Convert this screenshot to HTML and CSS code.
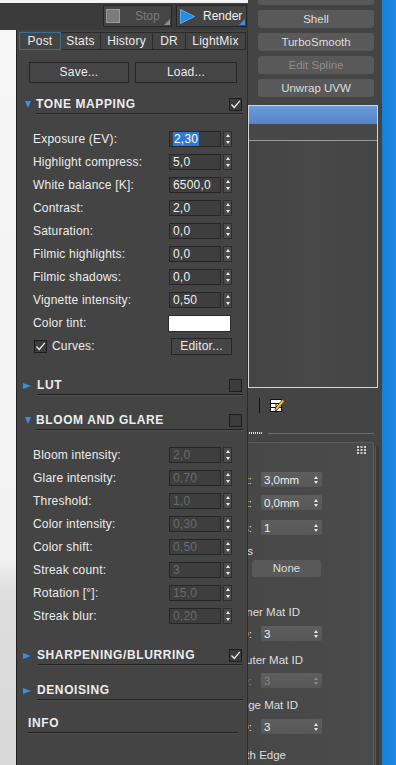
FILE: index.html
```html
<!DOCTYPE html>
<html lang="en">
<head>
    <meta charset="UTF-8">
    <meta name="viewport" content="width=device-width, initial-scale=1.0">
    <title>Corona VFB - Post</title>
    <link rel="stylesheet" href="styles.css">
</head>
<body>
<div class="screen">
    <!-- frame buffer window -->
    <div class="vfb">
        <div class="vfb-bar">
            <div class="rbtn rbtn-stop"><span class="stop-ico"></span><span>Stop</span></div>
            <div class="rbtn rbtn-render">
                <svg width="15" height="15" viewBox="0 0 15 15"><polygon points="0.5,0.5 14.5,7.5 0.5,14.5" fill="#2c8ae4" stroke="#5aa8f0" stroke-width="1"/></svg>
                <span>Render</span>
            </div>
        </div>
        <div class="vfb-main">
            <div class="image-area"></div>
            <div class="post">
                <div class="tabs">
                    <div class="tab tab-on tab-post">Post</div>
                    <div class="tab tab-stats">Stats</div>
                    <div class="tab tab-history">History</div>
                    <div class="tab tab-dr">DR</div>
                    <div class="tab tab-lightmix">LightMix</div>
                </div>

                <div class="file-row">
                    <div class="btn btn-save">Save...</div>
                    <div class="btn btn-load">Load...</div>
                </div>

                <!-- tone mapping -->
                <div class="roll-head">
                    <span class="arrow-down"></span>
                    <div class="roll-title"><span>TONE MAPPING</span><span class="chk"><svg width="11" height="11" viewBox="0 0 11 11"><path d="M1.5 5.5 L4.3 8.5 L9.8 1.8" fill="none" stroke="#f2f2f2" stroke-width="1.2"/></svg></span></div>
                </div>
                <div class="roll-body">
                    <div class="row"><span class="lbl">Exposure (EV):</span><span class="field"><span class="sel">2,30</span></span><span class="spin"></span></div>
                    <div class="row"><span class="lbl">Highlight compress:</span><span class="field">5,0</span><span class="spin"></span></div>
                    <div class="row"><span class="lbl">White balance [K]:</span><span class="field">6500,0</span><span class="spin"></span></div>
                    <div class="row"><span class="lbl">Contrast:</span><span class="field">2,0</span><span class="spin"></span></div>
                    <div class="row"><span class="lbl">Saturation:</span><span class="field">0,0</span><span class="spin"></span></div>
                    <div class="row"><span class="lbl">Filmic highlights:</span><span class="field">0,0</span><span class="spin"></span></div>
                    <div class="row"><span class="lbl">Filmic shadows:</span><span class="field">0,0</span><span class="spin"></span></div>
                    <div class="row"><span class="lbl">Vignette intensity:</span><span class="field">0,50</span><span class="spin"></span></div>
                    <div class="row"><span class="lbl">Color tint:</span><span class="tint"></span></div>
                    <div class="row">
                        <span class="chk chk-row"><svg width="11" height="11" viewBox="0 0 11 11"><path d="M1.5 5.5 L4.3 8.5 L9.8 1.8" fill="none" stroke="#f2f2f2" stroke-width="1.2"/></svg></span>
                        <span class="lbl">Curves:</span>
                        <span class="btn btn-editor">Editor...</span>
                    </div>
                </div>

                <!-- lut -->
                <div class="roll-head roll-closed">
                    <span class="arrow-right"></span>
                    <div class="roll-title"><span>LUT</span><span class="chk"></span></div>
                </div>

                <!-- bloom and glare -->
                <div class="roll-head">
                    <span class="arrow-down"></span>
                    <div class="roll-title"><span>BLOOM AND GLARE</span><span class="chk"></span></div>
                </div>
                <div class="roll-body roll-off">
                    <div class="row"><span class="lbl">Bloom intensity:</span><span class="field">2,0</span><span class="spin"></span></div>
                    <div class="row"><span class="lbl">Glare intensity:</span><span class="field">0,70</span><span class="spin"></span></div>
                    <div class="row"><span class="lbl">Threshold:</span><span class="field">1,0</span><span class="spin"></span></div>
                    <div class="row"><span class="lbl">Color intensity:</span><span class="field">0,30</span><span class="spin"></span></div>
                    <div class="row"><span class="lbl">Color shift:</span><span class="field">0,50</span><span class="spin"></span></div>
                    <div class="row"><span class="lbl">Streak count:</span><span class="field">3</span><span class="spin"></span></div>
                    <div class="row"><span class="lbl">Rotation [°]:</span><span class="field">15,0</span><span class="spin"></span></div>
                    <div class="row"><span class="lbl">Streak blur:</span><span class="field">0,20</span><span class="spin"></span></div>
                </div>

                <div class="roll-head roll-closed">
                    <span class="arrow-right"></span>
                    <div class="roll-title"><span>SHARPENING/BLURRING</span><span class="chk"><svg width="11" height="11" viewBox="0 0 11 11"><path d="M1.5 5.5 L4.3 8.5 L9.8 1.8" fill="none" stroke="#f2f2f2" stroke-width="1.2"/></svg></span></div>
                </div>
                <div class="roll-head roll-closed roll-last">
                    <span class="arrow-right"></span>
                    <div class="roll-title"><span>DENOISING</span></div>
                </div>
                <div class="roll-info"><span>INFO</span></div>
            </div>
        </div>
    </div>

    <!-- 3ds max command panel, partly under the frame buffer -->
    <div class="cmd">
        <div class="mods">
            <div class="mbtn">FFD 3x3x3</div>
            <div class="mbtn">Shell</div>
            <div class="mbtn">TurboSmooth</div>
            <div class="mbtn mbtn-off">Edit Spline</div>
            <div class="mbtn">Unwrap UVW</div>
        </div>
        <div class="stack">
            <div class="stack-sel"></div>
            <div class="stack-row"></div>
        </div>
        <div class="stack-tools">
            <span class="tool-sep"></span>
            <svg width="15" height="16" viewBox="0 0 15 16">
                <rect x="0.5" y="2.5" width="11" height="12" fill="#fff" stroke="#111"/>
                <path d="M0.5 6.5H11.5M0.5 10.5H11.5M6 6.5V14.5" stroke="#111" fill="none"/>
                <path d="M5.5 11 L12.5 2.5 L14.5 4.2 L7.5 12.5 L5 13.5 Z" fill="#f2c230" stroke="#5b3f08" stroke-width="0.8"/>
            </svg>
        </div>
        <div class="roll-sep"><span class="dots"></span><span class="sep-line"></span></div>
        <div class="params-wrap">
            <div class="params">
                <div class="grip-row">
                    <svg width="9" height="8" viewBox="0 0 9 8" fill="#cfcfcf">
                        <rect x="0" y="0" width="2" height="2"/><rect x="3.5" y="0" width="2" height="2"/><rect x="7" y="0" width="2" height="2"/>
                        <rect x="0" y="3" width="2" height="2"/><rect x="3.5" y="3" width="2" height="2"/><rect x="7" y="3" width="2" height="2"/>
                        <rect x="0" y="6" width="2" height="2"/><rect x="3.5" y="6" width="2" height="2"/><rect x="7" y="6" width="2" height="2"/>
                    </svg>
                </div>
                <div class="prow mt15"><span class="pclip pclip-colon"><span>Inner Amount:</span></span><span class="pfield">3,0mm<span class="parr"></span></span></div>
                <div class="prow mt8"><span class="pclip pclip-colon"><span>Outer Amount:</span></span><span class="pfield">0,0mm<span class="parr"></span></span></div>
                <div class="prow mt10"><span class="pclip pclip-colon"><span>Segments:</span></span><span class="pfield">1<span class="parr"></span></span></div>
                <div class="ptext mt8"><span class="pclip pclip-bevel"><span>Bevel Edges</span></span></div>
                <div class="pbtn">None</div>
                <div class="ptext mt27"><span class="pclip pclip-inner"><span>Override Inner Mat ID</span></span></div>
                <div class="prow mt6"><span class="pclip pclip-colon"><span>Mat ID:</span></span><span class="pfield">3<span class="parr"></span></span></div>
                <div class="ptext mt11"><span class="pclip pclip-outer"><span>Override Outer Mat ID</span></span></div>
                <div class="prow prow-off mt5"><span class="pclip pclip-colon"><span>Mat ID:</span></span><span class="pfield">3<span class="parr"></span></span></div>
                <div class="ptext mt9"><span class="pclip pclip-edge"><span>Override Edge Mat ID</span></span></div>
                <div class="prow mt6"><span class="pclip pclip-colon"><span>Mat ID:</span></span><span class="pfield">3<span class="parr"></span></span></div>
                <div class="ptext mt13"><span class="pclip pclip-smooth"><span>Auto Smooth Edge</span></span></div>
            </div>
            <div class="scroll"></div>
        </div>
    </div>

    <div class="taskbar"></div>
</div>
</body>
</html>
```

FILE: styles.css
```css
/* common */
* {
    margin: 0;
    padding: 0;
    box-sizing: border-box;
}

body {
    width: 396px;
    height: 765px;
    overflow: hidden;
    background-color: #444;
    font-family: "Liberation Sans", Arial, sans-serif;
    font-size: 12px;
    color: #ececec;
}

.screen {
    display: flex;
    height: 765px;
}

/* frame buffer window */
.vfb {
    width: 248px;
    flex-shrink: 0;
    display: flex;
    flex-direction: column;
}

.vfb-bar {
    height: 30px;
    border-top: 3px solid #f4f4f4;
    background-color: #3b3b3b;
    display: flex;
    justify-content: flex-end;
    align-items: flex-start;
    gap: 4px;
    padding: 2px 1px 0 0;
}

.rbtn {
    position: relative;
    height: 22px;
    display: flex;
    align-items: center;
    background-color: #454545;
    border: 1px solid #262626;
    color: #f2f2f2;
}

.rbtn::after {
    content: "";
    position: absolute;
    right: 1px;
    bottom: 1px;
    border-left: 6px solid transparent;
    border-bottom: 6px solid #3b8de0;
}

.rbtn-stop {
    width: 69px;
    padding-left: 2px;
    gap: 15px;
    color: #7a7a7a;
}

.rbtn-stop::after {
    border-bottom-color: #8a8a8a;
}

.rbtn-render {
    width: 71px;
    padding-left: 3px;
    gap: 8px;
}

.stop-ico {
    width: 14px;
    height: 14px;
    background-color: #7b7b7b;
    border: 1px solid #9a9a9a;
}

.vfb-main {
    flex: 1;
    display: flex;
}

.image-area {
    width: 16px;
    background: linear-gradient(to bottom, #f6f6f6 0, #f2f2f2 72%, #dedede 76%, #d8d8d8 100%);
}

.post {
    flex: 1;
    background-color: #444;
    border-left: 1px solid #222;
    border-right: 1px solid #2b2b2b;
    letter-spacing: 0.2px;
}

/* tabs */
.tabs {
    display: flex;
    margin: 2px 0 0 2px;
}

.tab {
    height: 18px;
    line-height: 16px;
    text-align: center;
    border: 1px solid #2a2a2a;
    margin-left: -1px;
}

.tab:first-child {
    margin-left: 0;
}

.tab-on {
    border-color: #3d6c8e;
    position: relative;
}

.tab-post { width: 42px; }
.tab-stats { width: 41px; }
.tab-history { width: 53px; }
.tab-dr { width: 34px; }
.tab-lightmix { width: 61px; }

/* buttons */
.btn {
    display: block;
    height: 21px;
    line-height: 19px;
    text-align: center;
    background-color: #454545;
    border: 1px solid #262626;
}

.file-row {
    display: flex;
    gap: 6px;
    margin: 12px 0 12px 12px;
}

.btn-save { width: 100px; }
.btn-load { width: 102px; }

.btn-editor {
    width: 61px;
    height: 17px;
    line-height: 15px;
}

/* rollouts */
.roll-head {
    display: flex;
    align-items: center;
    padding-left: 6px;
    margin-right: 4px;
}

.roll-closed {
    margin-bottom: 16px;
}

.roll-last {
    margin-bottom: 14px;
}

.arrow-down {
    width: 0;
    height: 0;
    margin: 0 5px 0 2px;
    border-left: 3.5px solid transparent;
    border-right: 3.5px solid transparent;
    border-top: 7px solid #3b8fe3;
}

.arrow-right {
    width: 0;
    height: 0;
    margin-right: 6px;
    border-top: 3.5px solid transparent;
    border-bottom: 3.5px solid transparent;
    border-left: 8px solid #3b8fe3;
}

.roll-title {
    flex: 1;
    height: 19px;
    display: flex;
    align-items: center;
    justify-content: space-between;
    padding-right: 1px;
    border-bottom: 1px solid #222;
    box-shadow: 0 1px 0 #4f4f4f;
    font-weight: bold;
    letter-spacing: 0.6px;
}

.roll-info {
    height: 19px;
    display: flex;
    align-items: center;
    margin: 0 9px 0 11px;
    border-bottom: 1px solid #222;
    box-shadow: 0 1px 0 #4f4f4f;
    font-weight: bold;
    letter-spacing: 0.6px;
}

.roll-body {
    display: flex;
    flex-direction: column;
    gap: 7px;
    padding: 17px 15px 22px 16px;
}

.row {
    display: flex;
    align-items: center;
    height: 16px;
}

.lbl {
    flex: 1;
    white-space: nowrap;
}

.field {
    width: 52px;
    height: 16px;
    line-height: 15px;
    padding-left: 3px;
    background-color: #3e3e3e;
    border: 1px solid #262626;
    color: #f0f0f0;
}

.sel {
    background-color: #3476d3;
    color: #fff;
    padding: 0 1px;
}

.roll-off .field {
    color: #6b6b6b;
}

.spin {
    width: 9px;
    height: 16px;
    margin-left: 2px;
    display: flex;
    flex-direction: column;
    justify-content: space-around;
    align-items: center;
    background-color: #4b4b4b;
    border: 1px solid #2e2e2e;
}

.spin::before {
    content: "";
    border-left: 2.5px solid transparent;
    border-right: 2.5px solid transparent;
    border-bottom: 3px solid #eee;
}

.spin::after {
    content: "";
    border-left: 2.5px solid transparent;
    border-right: 2.5px solid transparent;
    border-top: 3px solid #eee;
}

.tint {
    width: 63px;
    height: 17px;
    margin-right: 1px;
    background-color: #fff;
    border: 1px solid #2a2a2a;
}

.chk {
    width: 13px;
    height: 13px;
    display: flex;
    align-items: center;
    justify-content: center;
    background-color: #3c3c3c;
    border: 1px solid #1d1d1d;
}

.chk-row {
    margin: 0 5px 0 1px;
}

/* command panel */
.cmd {
    width: 134px;
    flex-shrink: 0;
    overflow: hidden;
    display: flex;
    flex-direction: column;
    background-color: #444;
    font-size: 11.5px;
    color: #dedede;
}

.mods {
    display: flex;
    flex-direction: column;
    gap: 5px;
    width: 116px;
    margin: -13px 0 0 10px;
}

.mbtn {
    height: 18px;
    line-height: 18px;
    text-align: center;
    border-radius: 3px;
    background-color: #595959;
}

.mbtn-off {
    color: #8d8d8d;
}

.stack {
    width: 130px;
    height: 283px;
    margin-top: 8px;
    border: 1px solid #d6d6d6;
    background: linear-gradient(to right, #444 0, #484848 50%, #444 100%);
}

.stack-sel {
    height: 18px;
    background: linear-gradient(to bottom, #6b9bda, #5585c7);
}

.stack-row {
    height: 17px;
    border-bottom: 1px solid #9a9a9a;
    background-color: #474747;
}

.stack-tools {
    display: flex;
    align-items: center;
    gap: 10px;
    height: 16px;
    margin-top: 9px;
    padding-left: 11px;
}

.tool-sep {
    width: 1px;
    height: 15px;
    background-color: #141414;
}

.roll-sep {
    display: flex;
    align-items: center;
    height: 2px;
    margin-top: 19px;
}

.dots {
    width: 14px;
    height: 2px;
    margin-left: 1px;
    background: repeating-linear-gradient(to right, #e0e0e0 0 1px, transparent 1px 2px);
}

.sep-line {
    flex: 1;
    height: 1px;
    margin: 0 8px 0 5px;
    background-color: #6c6c6c;
}

.params-wrap {
    flex: 1;
    display: flex;
    margin-top: 8px;
}

.params {
    flex: 1;
    display: flex;
    flex-direction: column;
    border-top: 1px solid #5c5c5c;
    border-right: 1px solid #5c5c5c;
    border-top-right-radius: 3px;
    background: linear-gradient(to right, #474747, #4b4b4b);
}

.scroll {
    width: 4px;
    margin: 4px 3px 0 1px;
    background-color: #3a3a3a;
    border-left: 1px solid #555;
}

.grip-row {
    height: 14px;
    display: flex;
    align-items: center;
    justify-content: flex-end;
    padding-right: 7px;
}

.prow {
    display: flex;
    align-items: center;
    height: 15px;
}

.ptext {
    display: flex;
    height: 16px;
    line-height: 16px;
}

.pclip {
    display: flex;
    justify-content: flex-end;
    flex: none;
    min-width: 0;
    white-space: nowrap;
}

.pclip-colon { width: 4px; }
.pclip-bevel { width: 5px; }
.pclip-inner { width: 52px; }
.pclip-outer { width: 55px; }
.pclip-edge { width: 50px; }
.pclip-smooth { width: 38px; }

.pfield {
    width: 61px;
    height: 15px;
    margin-left: 9px;
    padding: 0 4px 0 3px;
    display: flex;
    align-items: center;
    justify-content: space-between;
    border-radius: 2px;
    background: linear-gradient(to bottom, #5e5e5e, #575757);
    color: #f0f0f0;
}

.parr {
    display: flex;
    flex-direction: column;
    gap: 2px;
}

.parr::before {
    content: "";
    border-left: 2.5px solid transparent;
    border-right: 2.5px solid transparent;
    border-bottom: 3px solid #e8e8e8;
}

.parr::after {
    content: "";
    border-left: 2.5px solid transparent;
    border-right: 2.5px solid transparent;
    border-top: 3px solid #e8e8e8;
}

.prow-off,
.prow-off .pfield {
    color: #858585;
}

.prow-off .parr::before { border-bottom-color: #8a8a8a; }
.prow-off .parr::after { border-top-color: #8a8a8a; }

.pbtn {
    width: 69px;
    height: 17px;
    line-height: 17px;
    margin: 1px 0 0 4px;
    text-align: center;
    border-radius: 3px;
    background-color: #595959;
}

.mt5 { margin-top: 5px; }
.mt6 { margin-top: 6px; }
.mt8 { margin-top: 8px; }
.mt9 { margin-top: 9px; }
.mt10 { margin-top: 10px; }
.mt11 { margin-top: 11px; }
.mt13 { margin-top: 13px; }
.mt15 { margin-top: 15px; }
.mt27 { margin-top: 27px; }

/* windows taskbar edge */
.taskbar {
    flex: 1;
    background: linear-gradient(to right, #167fd8, #1e8ae6);
}
```
